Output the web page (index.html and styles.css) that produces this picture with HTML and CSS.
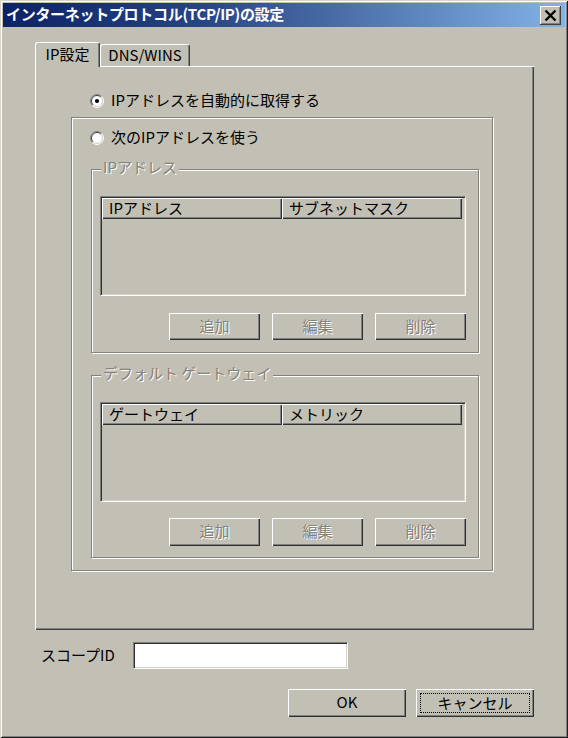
FILE: index.html
```html
<!DOCTYPE html>
<html lang="ja">
<head>
<meta charset="utf-8">
<title>インターネット プロトコル(TCP/IP)の設定</title>
<link rel="stylesheet" href="styles.css">
</head>
<body>
<div class="window">
  <div class="titlebar">
    <span class="title">インターネットプロトコル(TCP/IP)の設定</span>
    <div class="close">
      <svg width="21" height="19" viewBox="0 0 21 19"><path d="M5.5 4.5 L15.5 14.5 M15.5 4.5 L5.5 14.5" stroke="#000" stroke-width="2.4" fill="none"/></svg>
    </div>
  </div>
  <div class="content">
    <div class="tabs">
      <div class="tab active">IP設定</div>
      <div class="tab">DNS/WINS</div>
    </div>
    <div class="panel">
      <div class="radio-row first">
        <svg class="radio" width="14" height="14" viewBox="0 0 14 14">
          <circle cx="7" cy="7" r="6" fill="#fff"/>
          <path d="M2.4 11.6 A6.5 6.5 0 0 1 11.6 2.4" stroke="#808080" fill="none"/>
          <path d="M11.6 2.4 A6.5 6.5 0 0 1 2.4 11.6" stroke="#fff" fill="none"/>
          <path d="M3.1 10.9 A5.5 5.5 0 0 1 10.9 3.1" stroke="#404040" fill="none"/>
          <path d="M10.9 3.1 A5.5 5.5 0 0 1 3.1 10.9" stroke="#d4d0c8" fill="none"/>
          <circle cx="7" cy="7" r="2.1" fill="#000"/>
        </svg>
        <span class="label">IPアドレスを自動的に取得する</span>
      </div>
      <div class="outer-group">
        <div class="radio-row">
          <svg class="radio" width="14" height="14" viewBox="0 0 14 14">
            <circle cx="7" cy="7" r="6" fill="#fff"/>
            <path d="M2.4 11.6 A6.5 6.5 0 0 1 11.6 2.4" stroke="#808080" fill="none"/>
            <path d="M11.6 2.4 A6.5 6.5 0 0 1 2.4 11.6" stroke="#fff" fill="none"/>
            <path d="M3.1 10.9 A5.5 5.5 0 0 1 10.9 3.1" stroke="#404040" fill="none"/>
            <path d="M10.9 3.1 A5.5 5.5 0 0 1 3.1 10.9" stroke="#d4d0c8" fill="none"/>
          </svg>
          <span class="label">次のIPアドレスを使う</span>
        </div>

        <div class="group g1">
          <span class="legend">IPアドレス</span>
          <div class="listview">
            <div class="header">
              <div class="col">IPアドレス</div>
              <div class="col">サブネットマスク</div>
            </div>
          </div>
          <div class="btn-row">
            <div class="btn disabled">追加</div>
            <div class="btn disabled">編集</div>
            <div class="btn disabled">削除</div>
          </div>
        </div>

        <div class="group g2">
          <span class="legend">デフォルト ゲートウェイ</span>
          <div class="listview">
            <div class="header">
              <div class="col">ゲートウェイ</div>
              <div class="col">メトリック</div>
            </div>
          </div>
          <div class="btn-row">
            <div class="btn disabled">追加</div>
            <div class="btn disabled">編集</div>
            <div class="btn disabled">削除</div>
          </div>
        </div>
      </div>
    </div>

    <div class="scope-row">
      <span class="scope-label">スコープID</span>
      <div class="textbox"></div>
    </div>

    <div class="dialog-buttons">
      <div class="btn big">OK</div>
      <div class="btn big focused"><span class="focus">キャンセル</span></div>
    </div>
  </div>
</div>
</body>
</html>
```
FILE: styles.css
```css
html, body {
  margin: 0;
  padding: 0;
  background: #c2bfb4;
}

body {
  font-family: "Noto Sans CJK JP", "Liberation Sans", sans-serif;
  font-size: 15px;
  color: #000;
}

.window {
  width: 568px;
  height: 738px;
  box-sizing: border-box;
  padding: 3px;
  background: #c2bfb4;
  box-shadow: inset 1px 1px 0 #d8d4cc, inset -1px -1px 0 #202020,
              inset 2px 2px 0 #ffffff, inset -2px -2px 0 #808080;
  display: flex;
  flex-direction: column;
}

.titlebar {
  height: 24px;
  display: flex;
  align-items: center;
  justify-content: space-between;
  padding: 0 4px 0 3px;
  background: linear-gradient(to right, #0c2266 0%, #274484 35%, #4a6ea8 60%, #82b2e8 100%);
}

.title {
  color: #fff;
  font-weight: 700;
  font-size: 15px;
  line-height: 22px;
  padding-bottom: 2px;
  letter-spacing: -0.3px;
}

.close {
  width: 21px;
  height: 19px;
  box-sizing: border-box;
  background: #c2bfb4;
  box-shadow: inset -1px -1px 0 #404040, inset 1px 1px 0 #ffffff, inset -2px -2px 0 #808080;
  display: flex;
}

.content {
  padding: 15px 0 0 32px;
}

.tabs {
  display: flex;
  align-items: flex-end;
  height: 24px;
  position: relative;
  z-index: 1;
}

.tab {
  box-sizing: border-box;
  height: 22px;
  width: 90px;
  text-align: center;
  line-height: 19px;
  background: #c2bfb4;
  border-top: 1px solid #fff;
  border-left: 1px solid #fff;
  border-right: 1px solid #404040;
  border-radius: 3px 3px 0 0;
  box-shadow: inset -1px 0 0 #808080;
}

.tab.active {
  width: 65px;
  height: 25px;
  margin-bottom: -1px;
  line-height: 21px;
}

.panel {
  width: 499px;
  height: 564px;
  box-sizing: border-box;
  padding: 27px 0 0 36px;
  box-shadow: inset 1px 1px 0 #fff, inset -1px -1px 0 #404040, inset -2px -2px 0 #808080;
}

.radio-row {
  display: flex;
  align-items: center;
  height: 16px;
  gap: 7px;
  white-space: nowrap;
}

.radio-row .label {
  line-height: 18px;
  padding-bottom: 3px;
}

.radio-row.first {
  margin-left: 19px;
  margin-bottom: 8px;
}

.radio {
  flex: none;
}

.outer-group {
  width: 422px;
  height: 454px;
  box-sizing: border-box;
  padding: 12px 0 0 18px;
  border: 1px solid #858279;
  box-shadow: 1px 1px 0 #fff, inset 1px 1px 0 #fff;
}

.group {
  position: relative;
  width: 388px;
  box-sizing: border-box;
  margin-left: 1px;
  padding: 26px 0 0 8px;
  border: 1px solid #858279;
  box-shadow: 1px 1px 0 #fff, inset 1px 1px 0 #fff;
}

.g1 {
  height: 184px;
  margin-top: 23px;
}

.g2 {
  height: 183px;
  margin-top: 22px;
}

.legend {
  position: absolute;
  top: -13px;
  left: 9px;
  padding: 0 2px;
  line-height: 20px;
  background: #c2bfb4;
  color: #858279;
  text-shadow: 1px 1px 0 #fff;
  white-space: nowrap;
}

.listview {
  width: 366px;
  height: 100px;
  box-sizing: border-box;
  padding: 1px;
  border: 1px solid;
  border-color: #808080 #ffffff #ffffff #808080;
  box-shadow: inset 1px 1px 0 #303030, inset -1px -1px 0 #d4d0c8;
}

.header {
  display: flex;
  height: 21px;
}

.col {
  width: 180px;
  box-sizing: border-box;
  padding: 0 0 2px 7px;
  line-height: 19px;
  white-space: nowrap;
  box-shadow: inset 1px 1px 0 #fff, inset -1px -1px 0 #303030, inset -2px -2px 0 #808080;
}

.btn-row {
  display: flex;
  justify-content: flex-end;
  gap: 12px;
  width: 366px;
  margin-top: 17px;
}

.btn {
  width: 91px;
  height: 27px;
  box-sizing: border-box;
  padding-bottom: 3px;
  display: flex;
  align-items: center;
  justify-content: center;
  background: #c2bfb4;
  box-shadow: inset 1px 1px 0 #fff, inset -1px -1px 0 #303030, inset -2px -2px 0 #808080;
}

.btn.disabled {
  color: #858279;
  text-shadow: 1px 1px 0 #fff;
}

.g2 .btn-row {
  margin-top: 16px;
}

.g2 .btn {
  height: 28px;
}

.scope-row {
  display: flex;
  align-items: center;
  margin-top: 12px;
  height: 27px;
}

.scope-label {
  width: 98px;
  box-sizing: border-box;
  padding: 0 0 3px 6px;
  white-space: nowrap;
}

.textbox {
  width: 215px;
  height: 27px;
  box-sizing: border-box;
  background: #fff;
  border: 1px solid;
  border-color: #808080 #ffffff #ffffff #808080;
  box-shadow: inset 1px 1px 0 #303030, inset -1px -1px 0 #d4d0c8;
}

.dialog-buttons {
  width: 499px;
  display: flex;
  justify-content: flex-end;
  gap: 10px;
  margin-top: 20px;
}

.btn.big {
  width: 118px;
  height: 28px;
}

.btn.focused {
  padding: 4px;
}

.focus {
  flex: 1;
  align-self: stretch;
  display: flex;
  align-items: center;
  justify-content: center;
  padding-bottom: 2px;
  border: 1px dotted #000;
}
```
